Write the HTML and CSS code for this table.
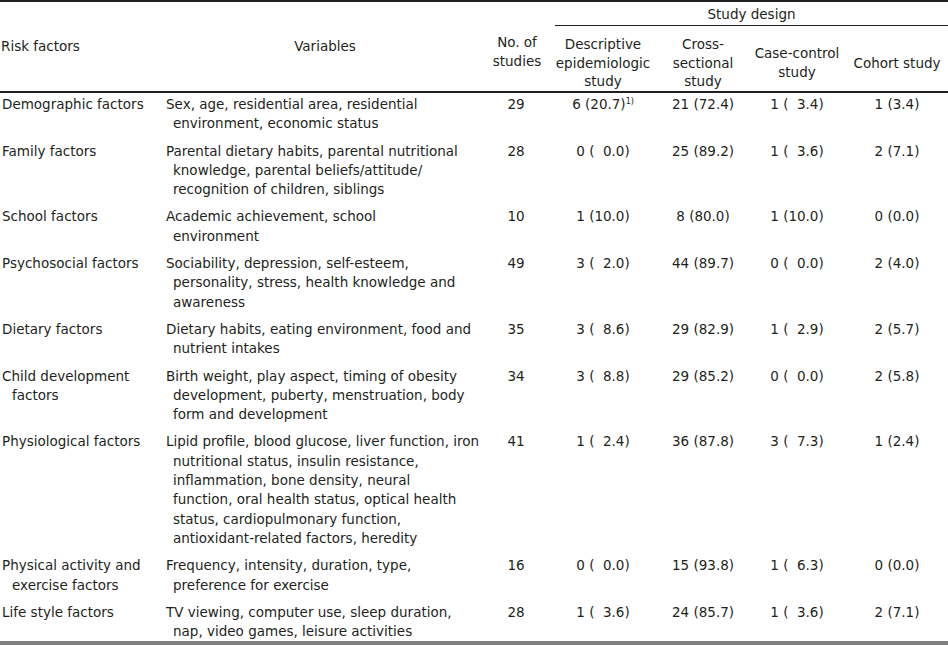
FILE: index.html
```html
<!DOCTYPE html>
<html lang="en">
<head>
<meta charset="utf-8">
<title>Risk factors and study design</title>
<link rel="stylesheet" href="styles.css">
</head>
<body>
<table class="t">
  <colgroup>
    <col class="c-risk">
    <col class="c-var">
    <col class="c-no">
    <col class="c-desc">
    <col class="c-cross">
    <col class="c-case">
    <col class="c-coh">
  </colgroup>
  <thead>
    <tr>
      <th rowspan="2" class="h-risk">Risk factors</th>
      <th rowspan="2" class="h-var">Variables</th>
      <th rowspan="2" class="h-no">No. of<br>studies</th>
      <th colspan="4" class="h-sd"><div class="sd-label">Study design</div></th>
    </tr>
    <tr>
      <th class="h-sub">Descriptive<br>epidemiologic<br>study</th>
      <th class="h-sub">Cross-<br>sectional<br>study</th>
      <th class="h-sub">Case-control<br>study</th>
      <th class="h-sub h-coh">Cohort study</th>
    </tr>
  </thead>
  <tbody>
    <tr>
      <td class="risk">Demographic factors</td>
      <td class="var">Sex, age, residential area, residential<br>environment, economic status</td>
      <td class="num">29</td>
      <td class="num">6 (20.7)<sup class="fn">1)</sup></td>
      <td class="num">21 (72.4)</td>
      <td class="num">1 (&#8199;3.4)</td>
      <td class="num coh">1 (3.4)</td>
    </tr>
    <tr>
      <td class="risk">Family factors</td>
      <td class="var">Parental dietary habits, parental nutritional<br>knowledge, parental beliefs/attitude/<br>recognition of children, siblings</td>
      <td class="num">28</td>
      <td class="num">0 (&#8199;0.0)</td>
      <td class="num">25 (89.2)</td>
      <td class="num">1 (&#8199;3.6)</td>
      <td class="num coh">2 (7.1)</td>
    </tr>
    <tr>
      <td class="risk">School factors</td>
      <td class="var">Academic achievement, school<br>environment</td>
      <td class="num">10</td>
      <td class="num">1 (10.0)</td>
      <td class="num">8 (80.0)</td>
      <td class="num">1 (10.0)</td>
      <td class="num coh">0 (0.0)</td>
    </tr>
    <tr>
      <td class="risk">Psychosocial factors</td>
      <td class="var">Sociability, depression, self-esteem,<br>personality, stress, health knowledge and<br>awareness</td>
      <td class="num">49</td>
      <td class="num">3 (&#8199;2.0)</td>
      <td class="num">44 (89.7)</td>
      <td class="num">0 (&#8199;0.0)</td>
      <td class="num coh">2 (4.0)</td>
    </tr>
    <tr>
      <td class="risk">Dietary factors</td>
      <td class="var">Dietary habits, eating environment, food and<br>nutrient intakes</td>
      <td class="num">35</td>
      <td class="num">3 (&#8199;8.6)</td>
      <td class="num">29 (82.9)</td>
      <td class="num">1 (&#8199;2.9)</td>
      <td class="num coh">2 (5.7)</td>
    </tr>
    <tr>
      <td class="risk">Child development<br>factors</td>
      <td class="var">Birth weight, play aspect, timing of obesity<br>development, puberty, menstruation, body<br>form and development</td>
      <td class="num">34</td>
      <td class="num">3 (&#8199;8.8)</td>
      <td class="num">29 (85.2)</td>
      <td class="num">0 (&#8199;0.0)</td>
      <td class="num coh">2 (5.8)</td>
    </tr>
    <tr>
      <td class="risk">Physiological factors</td>
      <td class="var">Lipid profile, blood glucose, liver function, iron<br>nutritional status, insulin resistance,<br>inflammation, bone density, neural<br>function, oral health status, optical health<br>status, cardiopulmonary function,<br>antioxidant-related factors, heredity</td>
      <td class="num">41</td>
      <td class="num">1 (&#8199;2.4)</td>
      <td class="num">36 (87.8)</td>
      <td class="num">3 (&#8199;7.3)</td>
      <td class="num coh">1 (2.4)</td>
    </tr>
    <tr>
      <td class="risk">Physical activity and<br>exercise factors</td>
      <td class="var">Frequency, intensity, duration, type,<br>preference for exercise</td>
      <td class="num">16</td>
      <td class="num">0 (&#8199;0.0)</td>
      <td class="num">15 (93.8)</td>
      <td class="num">1 (&#8199;6.3)</td>
      <td class="num coh">0 (0.0)</td>
    </tr>
    <tr class="last">
      <td class="risk">Life style factors</td>
      <td class="var">TV viewing, computer use, sleep duration,<br>nap, video games, leisure activities</td>
      <td class="num">28</td>
      <td class="num">1 (&#8199;3.6)</td>
      <td class="num">24 (85.7)</td>
      <td class="num">1 (&#8199;3.6)</td>
      <td class="num coh">2 (7.1)</td>
    </tr>
  </tbody>
</table>
</body>
</html>
```
FILE: styles.css
```css
html, body {
  margin: 0;
  padding: 0;
  background: #ffffff;
}

body {
  font-family: "DejaVu Sans", "Liberation Sans", sans-serif;
  font-size: 13.5px;
  color: #231f20;
}

.t {
  width: 948px;
  table-layout: fixed;
  border-collapse: separate;
  border-spacing: 0;
  border-top: 2px solid #231f20;
}

.c-risk { width: 166px; }
.c-var { width: 322px; }
.c-no { width: 56px; }
.c-desc { width: 118px; }
.c-cross { width: 82px; }
.c-case { width: 106px; }
.c-coh { width: 98px; }

th {
  font-weight: normal;
  padding: 0;
  line-height: 18.5px;
}

.h-risk, .h-var, .h-no {
  vertical-align: middle;
  border-bottom: 2px solid #231f20;
}

.h-risk {
  text-align: left;
  padding-left: 1px;
}

.h-var {
  text-align: center;
  padding-right: 4px;
}

.h-no {
  text-align: center;
  padding-top: 11px;
  padding-left: 2px;
}

.h-sd {
  padding: 0;
  vertical-align: top;
}

.sd-label {
  margin-left: 11px;
  padding-top: 3px;
  padding-bottom: 1px;
  line-height: 19px;
  text-align: center;
  border-bottom: 1px solid #231f20;
}

.h-sub {
  text-align: center;
  vertical-align: middle;
  padding-top: 9px;
  border-bottom: 2px solid #231f20;
}

.h-coh {
  padding-right: 4px;
}

td {
  vertical-align: top;
  line-height: 19.3px;
  padding: 2.5px 0 5.5px;
  white-space: nowrap;
}

.risk {
  padding-left: 12px;
  text-indent: -10px;
}

.var {
  padding-left: 7px;
  text-indent: -7px;
}

.num {
  text-align: center;
}

.coh {
  padding-right: 4px;
}

.fn {
  font-size: 8px;
  line-height: 0;
  vertical-align: 5px;
}

.last td {
  padding-bottom: 0;
  border-bottom: 4px solid #808080;
}
```
